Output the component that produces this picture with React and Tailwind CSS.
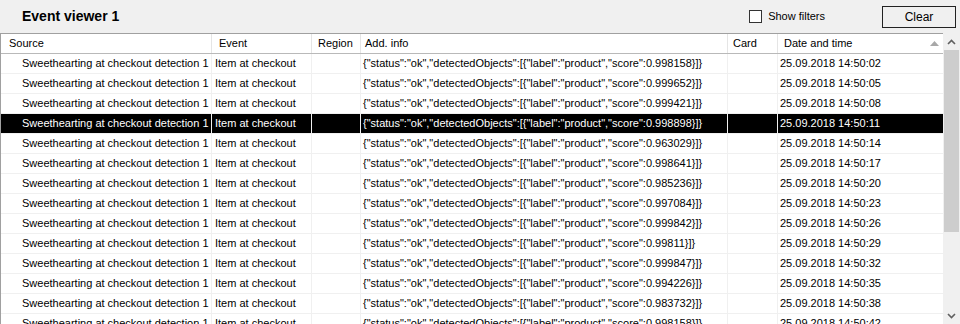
import React from 'react';

const scores = [
  '0.998158', '0.999652', '0.999421', '0.998898', '0.963029', '0.998641', '0.985236',
  '0.997084', '0.999842', '0.99811', '0.999847', '0.994226', '0.983732', '0.998158',
];
const times = [
  '14:50:02', '14:50:05', '14:50:08', '14:50:11', '14:50:14', '14:50:17', '14:50:20',
  '14:50:23', '14:50:26', '14:50:29', '14:50:32', '14:50:35', '14:50:38', '14:50:42',
];

const rows = scores.map((score, i) => ({
  source: 'Sweethearting at checkout detection 1',
  event: 'Item at checkout',
  region: '',
  info: `{"status":"ok","detectedObjects":[{"label":"product","score":${score}}]}`,
  card: '',
  date: `25.09.2018 ${times[i]}`,
  selected: i === 3,
}));

const cols = 'grid grid-cols-[211px_100px_49px_367px_50px_165px]';

const App = () => {
  return (
    <div className="w-[960px] h-[324px] overflow-hidden bg-[#f0f0f0] text-[11px] text-black font-['Liberation_Sans',Arial,sans-serif] flex flex-col">
      {/* toolbar */}
      <div className="h-[33px] flex items-center shrink-0">
        <div className="pl-[22px] text-[14px] font-bold">Event viewer 1</div>
        <label className="ml-auto flex items-center gap-[6px] text-[11px]">
          <span className="w-[13px] h-[13px] border border-[#333] bg-white" />
          Show filters
        </label>
        <button className="ml-[57px] mr-[4px] w-[74px] h-[22px] border border-[#222] bg-[#f0f0f0] text-[12px]">
          Clear
        </button>
      </div>

      {/* table + scrollbar */}
      <div className="flex flex-1 min-h-0">
        <div className="w-[943px] bg-white border-t border-l border-[#a0a0a0] overflow-hidden">
          <div className={`${cols} h-[20px] border-b border-[#b9b9b9]`}>
            <div className="border-r border-[#e5e5e5] pl-2 flex items-center">Source</div>
            <div className="border-r border-[#e5e5e5] pl-[7px] flex items-center">Event</div>
            <div className="border-r border-[#e5e5e5] pl-[6px] flex items-center">Region</div>
            <div className="border-r border-[#e5e5e5] pl-[4px] flex items-center">Add. info</div>
            <div className="border-r border-[#e5e5e5] pl-[5px] flex items-center">Card</div>
            <div className="pl-[6px] pr-[4px] flex items-center justify-between">
              Date and time
              <svg width="9" height="5" viewBox="0 0 9 5">
                <path d="M4.5 0L9 5H0z" fill="#a8a8a8" />
              </svg>
            </div>
          </div>
          {rows.map((r, i) => (
            <div
              key={i}
              className={`${cols} h-[20px] border-b border-[#f0f0f0] ${r.selected ? 'bg-black text-white' : ''}`}
            >
              <div className="border-r border-[#f0f0f0] pl-[21px] flex items-center whitespace-nowrap overflow-hidden">{r.source}</div>
              <div className="border-r border-[#f0f0f0] pl-[3px] flex items-center whitespace-nowrap overflow-hidden">{r.event}</div>
              <div className="border-r border-[#f0f0f0] flex items-center">{r.region}</div>
              <div className="border-r border-[#f0f0f0] pl-[2px] flex items-center whitespace-nowrap overflow-hidden">{r.info}</div>
              <div className="border-r border-[#f0f0f0] flex items-center">{r.card}</div>
              <div className="pl-[2px] flex items-center whitespace-nowrap">{r.date}</div>
            </div>
          ))}
        </div>

        <div className="w-[17px] flex flex-col bg-[#f0f0f0]">
          <div className="h-[17px] flex items-center justify-center">
            <svg width="9" height="6" viewBox="0 0 9 6">
              <path d="M1 5L4.5 1.5L8 5" stroke="#606060" strokeWidth="1.6" fill="none" />
            </svg>
          </div>
          <div className="flex-1 px-[1px]">
            <div className="h-[182px] bg-[#cdcdcd]" />
          </div>
          <div className="h-[17px] flex items-center justify-center">
            <svg width="9" height="6" viewBox="0 0 9 6">
              <path d="M1 1L4.5 4.5L8 1" stroke="#606060" strokeWidth="1.6" fill="none" />
            </svg>
          </div>
        </div>
      </div>
    </div>
  );
};

export default App;
